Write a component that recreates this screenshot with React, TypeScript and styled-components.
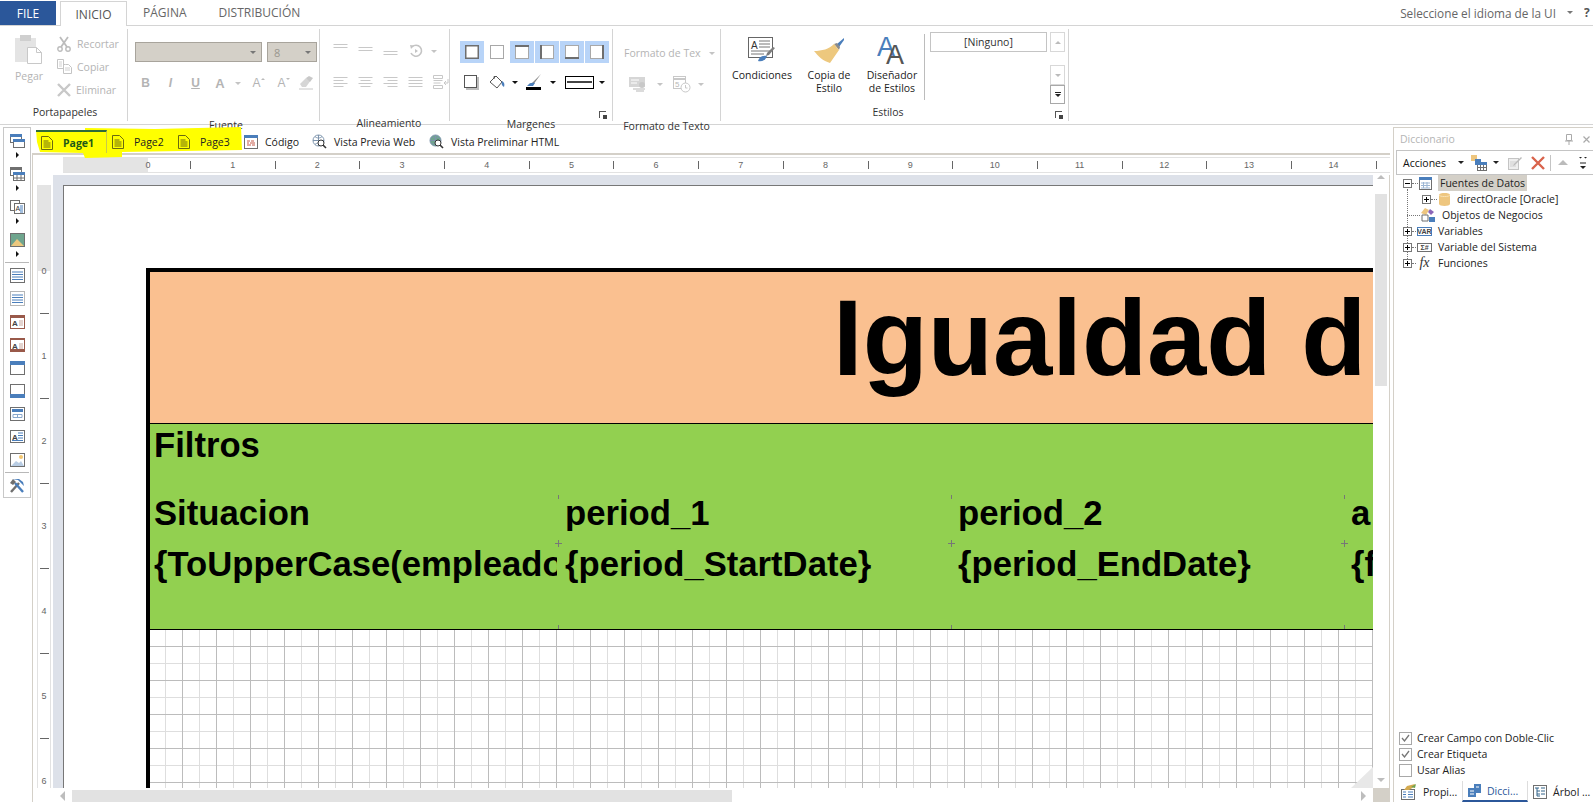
import React from "react";
import styled, { createGlobalStyle } from "styled-components";

const UI = `"Open Sans", "Noto Sans", "Liberation Sans", sans-serif`;
const ARIAL = `"Liberation Sans", Arial, sans-serif`;
const LINE = "#d4d4d4";
const KHAKI = "#d4d0c8";
const OFF = "#b4b4b4";

const Global = createGlobalStyle`
  html, body { margin: 0; padding: 0; background: #fff; overflow: hidden; }
  #root { width: 1593px; height: 802px; }
`;

const Root = styled.div`
  width: 1593px; height: 802px; display: flex; flex-direction: column;
  font-family: ${UI}; font-size: 10.5px; color: #333; background: #fff; overflow: hidden;
`;
const Svg = styled.svg`display: block; flex: none;`;

/* ---------- triangles ---------- */
const Caret = styled.span<{ $dir?: "d" | "u" | "r" | "l"; $c?: string; $s?: number }>`
  display: block; flex: none; width: 0; height: 0;
  ${({ $dir = "d", $c = "#333", $s = 3 }) => {
    const side = `border-left:${$s}px solid transparent;border-right:${$s}px solid transparent;`;
    const vert = `border-top:${$s}px solid transparent;border-bottom:${$s}px solid transparent;`;
    if ($dir === "d") return side + `border-top:${$s}px solid ${$c};`;
    if ($dir === "u") return side + `border-bottom:${$s}px solid ${$c};`;
    if ($dir === "r") return vert + `border-left:${$s}px solid ${$c};`;
    return vert + `border-right:${$s}px solid ${$c};`;
  }}
`;

/* ---------- tab strip ---------- */
const TabStrip = styled.div`
  height: 26px; box-sizing: border-box; display: flex; align-items: flex-end; border-bottom: 1px solid ${LINE}; flex: none;
`;
const FileTab = styled.div`
  width: 56px; height: 24px; background: #2b579a; color: #fff; font-size: 12px;
  display: flex; align-items: center; justify-content: center; margin-bottom: 0;
`;
const ActiveTab = styled.div`
  width: 67px; height: 25px; margin: 0 0 -1px 4px; box-sizing: border-box; background: #fff;
  border: 1px solid ${LINE}; border-bottom: 0; font-size: 12px; color: #555;
  display: flex; align-items: center; justify-content: center;
`;
const PlainTab = styled.div`
  padding: 0 16px; height: 25px; display: flex; align-items: center; font-size: 12px; color: #666;
`;
const LangBox = styled.div`
  margin-left: auto; height: 25px; display: flex; align-items: center; font-size: 11.8px; color: #666; padding-right: 0;
`;
const LangHelp = styled.span`
  margin-left: 11px; width: 9px; overflow: hidden; font-weight: 700; font-size: 12px; color: #555;
`;

/* ---------- ribbon ---------- */
const Ribbon = styled.div`
  height: 99px; box-sizing: border-box; flex: none; display: flex; padding: 3px 0 3px; border-bottom: 1px solid ${LINE};
`;
const Group = styled.div<{ $w: number }>`
  width: ${(p) => p.$w}px; box-sizing: border-box; flex: none; display: flex; flex-direction: column;
  border-right: 1px solid ${LINE}; position: relative;
`;
const GroupBody = styled.div`
  height: 75px; flex: none; overflow: visible;
`;
const GroupLabel = styled.div<{ $shift?: number; $right?: number }>`
  height: 17px; line-height: 17px; text-align: center; color: #333; font-size: 10.5px;
  padding-left: ${(p) => p.$shift ?? 0}px; padding-right: ${(p) => p.$right ?? 0}px;
`;
const Launcher = styled.span`
  position: absolute; right: 6px; bottom: 3px; width: 7px; height: 7px; box-sizing: border-box;
  border-left: 1px solid #555; border-top: 1px solid #555;
  &::after { content: ""; position: absolute; right: -1px; bottom: -1px; width: 4px; height: 4px; background: #444; }
`;

const PasteBody = styled(GroupBody)`display: flex; padding-left: 14px;`;
const PasteBtn = styled.div`
  width: 30px; display: flex; flex-direction: column; align-items: center; padding-top: 5px; color: ${OFF};
`;
const PasteText = styled.span`margin-top: 5px; line-height: 14px;`;
const ClipCol = styled.div`margin-left: 13px; padding-top: 3px; display: flex; flex-direction: column;`;
const ClipRow = styled.div`height: 23px; display: flex; align-items: center; gap: 5px; color: ${OFF};`;

const Stack = styled(GroupBody)<{ $pad: number; $top: number }>`
  padding-left: ${(p) => p.$pad}px; padding-top: ${(p) => p.$top}px; display: flex; flex-direction: column;
`;
const Combo = styled.div<{ $w: number }>`
  width: ${(p) => p.$w}px; height: 20px; box-sizing: border-box; background: ${KHAKI};
  border: 1px solid #a8a49c; display: flex; align-items: center; padding: 0 5px 0 6px; color: #9a978f; font-size: 11px;
  justify-content: space-between;
`;
const ComboRow = styled.div`display: flex; gap: 5px; margin-bottom: 10px;`;
const IconRow = styled.div<{ $mt?: number }>`
  display: flex; height: 22px; align-items: center; margin-top: ${(p) => p.$mt ?? 0}px;
`;
const Cell = styled.div<{ $w: number }>`
  width: ${(p) => p.$w}px; flex: none; height: 100%; display: flex; align-items: center; justify-content: center;
`;
const Glyph = styled.span<{ $b?: boolean; $i?: boolean; $u?: boolean; $s?: number }>`
  font-family: ${ARIAL}; color: ${OFF}; line-height: 1; font-size: ${(p) => p.$s ?? 12}px;
  font-weight: ${(p) => (p.$b ? 700 : 400)}; font-style: ${(p) => (p.$i ? "italic" : "normal")};
  text-decoration: ${(p) => (p.$u ? "underline" : "none")}; position: relative;
`;
const GlyphMark = styled.span`position: absolute; right: -4px; top: 1px;`;

const BorderBtn = styled.div<{ $on?: boolean }>`
  width: 24px; height: 22px; flex: none; background: ${(p) => (p.$on ? "#b8d4f8" : "transparent")};
  display: flex; align-items: center; justify-content: center;
`;
const BorderRow = styled.div`display: flex; gap: 1px;`;
const LineBox = styled.div`
  width: 29px; height: 13px; box-sizing: border-box; border: 1px solid #000; display: flex; align-items: center;
  &::after { content: ""; flex: 1; height: 2px; margin: 0 1px; background: #444; }
`;
const FormatRow = styled.div`display: flex; align-items: center; height: 20px; color: ${OFF};`;
const FormatText = styled.div`width: 77px; overflow: hidden; white-space: nowrap; margin-right: 8px;`;

const StyleBody = styled(GroupBody)`display: flex; padding-left: 10px;`;
const BigBtn = styled.div<{ $w: number }>`
  width: ${(p) => p.$w}px; flex: none; display: flex; flex-direction: column; align-items: center; padding-top: 6px; color: #222;
`;
const BigIcon = styled.div`height: 30px; display: flex; align-items: center;`;
const BigText = styled.div`margin-top: 4px; line-height: 13px; text-align: center; white-space: pre-line;`;
const StyleSep = styled.div`width: 1px; height: 66px; margin: 5px 5px 0 5px; background: #bcbcbc; flex: none;`;
const StyleName = styled.div`
  width: 117px; height: 20px; box-sizing: border-box; margin-top: 3px; border: 1px solid #c4c4c4;
  display: flex; align-items: center; justify-content: center; flex: none; color: #333;
`;
const SpinCol = styled.div`margin: 3px 0 0 3px; width: 15px; display: flex; flex-direction: column;`;
const SpinBtn = styled.div<{ $h: number; $mt?: number; $dark?: boolean }>`
  height: ${(p) => p.$h}px; box-sizing: border-box; margin-top: ${(p) => p.$mt ?? 0}px;
  border: 1px solid ${(p) => (p.$dark ? "#a8a8a8" : "#d8d8d8")}; display: flex; flex-direction: column; gap: 1px;
  align-items: center; justify-content: center;
`;
const SpinBar = styled.span`width: 6px; height: 1px; background: #222;`;

/* ---------- work area ---------- */
const Work = styled.div`flex: 1; min-height: 0; display: flex;`;

const ToolBox = styled.div`
  width: 28px; height: 371px; box-sizing: border-box; margin: 2px 1px 0 3px; flex: none;
  border: 1px solid #c8c8c8; display: flex; flex-direction: column; align-items: center; padding-top: 1px;
`;
const ToolCell = styled.div`height: 23px; width: 100%; flex: none; display: flex; align-items: center; justify-content: center;`;
const ToolArrow = styled.div`height: 10px; flex: none; padding-left: 1px;`;
const ToolSep = styled.div`
  height: 3px; width: 100%; flex: none; display: flex; align-items: center; padding: 0 1px; box-sizing: border-box;
  &::after { content: ""; flex: 1; height: 1px; background: #b8b8b8; }
`;

const Center = styled.div`width: 1358px; flex: none; display: flex; flex-direction: column;`;
const DocTabs = styled.div`
  height: 28px; flex: none; position: relative; z-index: 2; display: flex; padding: 5px 0 0 4px; box-sizing: border-box;
`;
const Highlight = styled.svg`position: absolute; left: 3px; top: 2px; z-index: 0;`;
const DocTab = styled.div<{ $w: number; $on?: boolean; $gap?: number }>`
  width: ${(p) => p.$w}px; height: 23px; box-sizing: border-box; flex: none; position: relative; z-index: 1;
  display: flex; align-items: center; gap: ${(p) => p.$gap ?? 7}px; padding-left: 5px; white-space: nowrap; color: #222;
  ${(p) => p.$on && `border-top: 2px solid #2f6a3a; border-right: 1px solid #c9c94a; font-weight: 700; color: #1d5a18;`}
`;

const Editor = styled.div`
  flex: 1; min-height: 0; display: grid; grid-template-columns: 20px 1320px 17px; grid-template-rows: 20px 613px 14px;
  border-top: 2px solid ${KHAKI}; border-left: 1px solid ${KHAKI};
`;
const HRuler = styled.div`
  grid-column: 2 / 4; margin: 2px 0 2px 10px; display: flex; overflow: hidden; font-size: 9px; color: #666;
  border-top: 1px solid #e2e2e2; border-bottom: 1px solid #e2e2e2; box-sizing: border-box;
`;
const RulerGrayH = styled.div`width: 85px; flex: none; background: #e4e4e4;`;
const HCell = styled.div`
  width: 84.7px; flex: none; position: relative; display: flex; align-items: center;
  &::after { content: ""; position: absolute; left: 42px; top: 3px; bottom: 3px; width: 1px; background: #666; }
`;
const HNum = styled.span`width: 12px; margin-left: -6px; text-align: center; font-family: ${ARIAL};`;
const VRuler = styled.div`
  margin: 10px 2px 0 4px; display: flex; flex-direction: column; overflow: hidden; font-size: 9px; color: #666;
  border-left: 1px solid #e2e2e2; border-right: 1px solid #e2e2e2; box-sizing: border-box;
`;
const RulerGrayV = styled.div`height: 86px; flex: none; background: #e4e4e4;`;
const VCell = styled.div`
  height: 85px; flex: none; position: relative; text-align: center;
  &::after { content: ""; position: absolute; left: 2px; top: 42px; width: 9px; height: 1px; background: #666; }
`;
const VNum = styled.span`display: block; margin-top: -5px; line-height: 10px; font-family: ${ARIAL};`;

const Canvas = styled.div`
  background: #dde1e9; padding: 10px 0 0 10px; overflow: hidden; position: relative; box-sizing: border-box;
`;
const Sheet = styled.div`
  width: 1500px; height: 800px; box-sizing: border-box; background: #fff; padding: 82px 0 0 82px;
  border-top: 1px solid #777; border-left: 1px solid #777;
`;
const Report = styled.div`border-top: 4px solid #000; border-left: 4px solid #000; width: 1400px; height: 700px;`;
const TitleBand = styled.div`
  height: 152px; box-sizing: border-box; background: #fac090; border-bottom: 1px solid #000;
  padding-left: 683px; font: 700 106.67px/132px ${ARIAL}; color: #000; white-space: nowrap; overflow: hidden;
`;
const GreenBand = styled.div`
  height: 206px; box-sizing: border-box; background: #92d050; border-bottom: 1px solid #000;
  font: 700 34.67px ${ARIAL}; color: #000;
`;
const FilterTitle = styled.div`height: 71px; line-height: 42px; padding-left: 4px;`;
const FieldGrid = styled.div`
  display: grid; grid-template-columns: 408px 393px 393px 393px; grid-template-rows: 48px 86px;
`;
const FieldCell = styled.div<{ $pad: number; $lh: number; $first?: boolean; $cross?: boolean }>`
  position: relative; padding-left: ${(p) => p.$pad}px; line-height: ${(p) => p.$lh}px; min-width: 0;
  &::before {
    content: ""; position: absolute; left: -3px; top: ${(p) => (p.$cross ? "-3px" : "0")};
    width: 7px; height: ${(p) => (p.$cross ? "7px" : "4px")};
    background:
      linear-gradient(#777, #777) 3px 0 / 1px 100% no-repeat
      ${(p) => (p.$cross ? `, linear-gradient(#777, #777) 0 3px / 100% 1px no-repeat` : "")};
    display: ${(p) => (p.$first ? "none" : "block")};
  }
  &::after {
    content: ""; position: absolute; left: 0; bottom: 0; width: 1px; height: 4px; background: #777;
    display: ${(p) => (p.$cross && !p.$first ? "block" : "none")};
  }
`;
const FieldText = styled.div`overflow: hidden; white-space: nowrap; margin-right: 1px;`;
const GridArea = styled.div`
  height: 340px;
  background:
    linear-gradient(#bcbcbc 1px, transparent 1px) 0 16px / 100% 34px,
    linear-gradient(90deg, #bcbcbc 1px, transparent 1px) 32px 0 / 34px 100%,
    linear-gradient(#dedede 1px, transparent 1px) 0 33px / 100% 34px,
    linear-gradient(90deg, #dedede 1px, transparent 1px) 15px 0 / 34px 100%,
    #fff;
`;
const CornerFold = styled.div`
  position: absolute; right: 0; bottom: 0; width: 22px; height: 21px; background: #e8e8e8;
  clip-path: polygon(100% 0, 100% 100%, 0 100%);
`;
const VScroll = styled.div`
  display: flex; flex-direction: column; align-items: center; padding: 0 3px 6px 2px; box-sizing: border-box;
  border-right: 1px solid ${KHAKI};
`;
const VThumb = styled.div`width: 12px; height: 192px; margin-top: 15px; background: #e2e2e2; flex: none;`;
const HScroll = styled.div`
  display: flex; align-items: center; padding: 2px 7px 0 7px; box-sizing: border-box;
`;
const HThumb = styled.div`width: 660px; height: 12px; margin-left: 7px; background: #e2e2e2; flex: none;`;
const ScrollEnd = styled.div`margin-left: auto;`;
const Corner = styled.div`background: ${KHAKI};`;

/* ---------- right panel ---------- */
const Panel = styled.div`
  flex: 1; min-width: 0; margin: 2px 0 0 3px; border-left: 1px solid ${KHAKI}; border-top: 1px solid ${KHAKI};
  display: flex; flex-direction: column; position: relative;
`;
const PanelTitle = styled.div`
  height: 22px; flex: none; display: flex; align-items: center; padding: 0 0 0 6px; color: #b5b5b5; gap: 0;
`;
const PanelTitleText = styled.span`flex: 1;`;
const PanelTool = styled.div`
  margin-left: 2px; height: 25px; box-sizing: border-box; flex: none; border: 1px solid #c4c4c4; border-right: 0;
  display: flex; align-items: center; padding-left: 6px; color: #111;
`;
const ToolGap = styled.span<{ $w: number }>`width: ${(p) => p.$w}px; flex: none;`;
const Tree = styled.div`position: relative; flex: none; padding-left: 9px;`;
const TreeSpine = styled.div`
  position: absolute; left: 13px; top: 14px; height: 72px; border-left: 1px dotted #777;
`;
const TreeRow = styled.div<{ $indent?: number }>`
  height: 16px; display: flex; align-items: center; color: #222; white-space: nowrap; padding-left: ${(p) => p.$indent ?? 0}px;
  position: relative;
`;
const Twist = styled.span`
  width: 9px; height: 9px; box-sizing: border-box; border: 1px solid #777; background: #fff; flex: none; position: relative;
  &::before { content: ""; position: absolute; left: 1px; right: 1px; top: 3px; height: 1px; background: #000; }
`;
const TwistPlus = styled(Twist)`
  &::after { content: ""; position: absolute; top: 1px; bottom: 1px; left: 3px; width: 1px; background: #000; }
`;
const Dots = styled.span<{ $w: number }>`
  width: ${(p) => p.$w}px; flex: none; margin-right: 1px; border-top: 1px dotted #777;
`;
const TreeIcon = styled.span<{ $w: number; $gap: number }>`
  width: ${(p) => p.$w}px; margin-right: ${(p) => p.$gap}px; flex: none; display: flex; justify-content: center;
`;
const TreeLabel = styled.span<{ $sel?: boolean }>`
  ${(p) => (p.$sel ? `background: ${KHAKI}; padding: 1px 2px; margin-left: -2px;` : "")}
  line-height: 14px;
`;
const FxMark = styled.span`font: italic 14px "Liberation Serif", serif; color: #333;`;
const Checks = styled.div`margin-top: auto; flex: none; padding: 0 0 3px 5px; display: flex; flex-direction: column;`;
const CheckRow = styled.label`height: 16px; display: flex; align-items: center; gap: 5px; color: #222;`;
const Box = styled.span`
  width: 13px; height: 13px; box-sizing: border-box; border: 1px solid #a8a8a8; display: flex; align-items: center; justify-content: center;
`;
const BottomTabs = styled.div`height: 21px; flex: none; display: flex; color: #222;`;
const BottomTab = styled.div<{ $w: number; $on?: boolean; $pad: number }>`
  width: ${(p) => p.$w}px; box-sizing: border-box; flex: none; display: flex; align-items: center; gap: 6px;
  padding-left: ${(p) => p.$pad}px; white-space: nowrap;
  ${(p) => p.$on && `border-left: 1px solid #ddd; border-right: 1px solid #ddd; border-bottom: 2px solid #2b579a; color: #2b579a;`}
`;

/* ---------- icons ---------- */
const G = "#6f6f6f";
const BL = "#4a7ebb";
const LG = "#c4c4c4";

const PasteIcon = () => (
  <Svg width="28" height="30" viewBox="0 0 28 30">
    <rect x="0" y="4" width="21" height="24" fill="#e4e4e4" />
    <rect x="5" y="1" width="11" height="6" fill="#cfcfcf" />
    <path d="M12.5 13.5h9l5 5v11h-14z" fill="#fff" stroke="#c8c8c8" />
    <path d="M21.5 13.5v5h5" fill="none" stroke="#c8c8c8" />
  </Svg>
);
const ScissorsIcon = () => (
  <Svg width="15" height="16" viewBox="0 0 15 16">
    <path d="M3 1l7 10M11 1L4 11" stroke="#bcbcbc" strokeWidth="1.8" fill="none" />
    <circle cx="3" cy="13" r="2.2" fill="none" stroke="#bcbcbc" strokeWidth="1.4" />
    <circle cx="11" cy="13" r="2.2" fill="none" stroke="#bcbcbc" strokeWidth="1.4" />
  </Svg>
);
const CopyIcon = () => (
  <Svg width="15" height="15" viewBox="0 0 15 15">
    <path d="M.5.5h6v9h-6z M8.5 5.5h3l3 3v6h-8v-9z" fill="#fff" stroke="#c4c4c4" />
    <path d="M2 3h3M2 5h3M2 7h3M8 9h5M8 11h5" stroke="#d0d0d0" />
  </Svg>
);
const CrossIcon = ({ c = "#c8c8c8", s = 14 }: { c?: string; s?: number }) => (
  <Svg width={s} height={s} viewBox="0 0 14 14">
    <path d="M1 1l12 12M13 1L1 13" stroke={c} strokeWidth="2.4" fill="none" />
  </Svg>
);
const EraserIcon = () => (
  <Svg width="15" height="14" viewBox="0 0 15 14">
    <path d="M1 8l6-6 5 2-5 7H3z" fill="#d6d6d6" />
    <path d="M7 2l3-2 4 2-3 4z" fill="#c8c8c8" />
    <path d="M0 13h14" stroke="#c8c8c8" />
  </Svg>
);
const AlignLines = ({ y, w = [14, 14, 14], o = "l" }: { y: number; w?: number[]; o?: "l" | "c" | "r" }) => (
  <Svg width="15" height="16" viewBox="0 0 15 16">
    {w.map((v, i) => {
      const x = o === "l" ? 0.5 : o === "r" ? 14.5 - v : (15 - v) / 2;
      return <path key={i} d={`M${x} ${y + i * 3 + 0.5}h${v}`} stroke="#c8c8c8" />;
    })}
  </Svg>
);
const RotateIcon = () => (
  <Svg width="14" height="14" viewBox="0 0 14 14">
    <path d="M3 3a5.5 5.5 0 1 1-1 6" fill="none" stroke="#c4c4c4" strokeWidth="1.6" />
    <path d="M1 1l4 .5L2 5z" fill="#c4c4c4" />
    <path d="M6 5l3 2-3 2z" fill="#c4c4c4" />
  </Svg>
);
const WrapIcon = () => (
  <Svg width="16" height="16" viewBox="0 0 16 16">
    <path d="M.5 1.5h9v3h-9zM.5 6.5h9M.5 9h7M.5 11.5h9v3h-9z" fill="none" stroke="#c8c8c8" />
    <path d="M15 5v4h-4M11 9l2-2M11 9l2 2" fill="none" stroke="#c8c8c8" />
  </Svg>
);
const BorderIcon = ({ side }: { side: "all" | "none" | "t" | "l" | "b" | "r" }) => {
  const dark = "#6e6e6e";
  return (
    <Svg width="14" height="14" viewBox="0 0 14 14">
      <rect x=".5" y=".5" width="13" height="13" fill="#fff" stroke={side === "all" ? dark : "#a8a8a8"} strokeWidth={side === "all" ? 2 : 1} />
      {side === "t" && <path d="M0 1h14" stroke={dark} strokeWidth="2" />}
      {side === "b" && <path d="M0 13h14" stroke={dark} strokeWidth="2" />}
      {side === "l" && <path d="M1 0v14" stroke={dark} strokeWidth="2" />}
      {side === "r" && <path d="M13 0v14" stroke={dark} strokeWidth="2" />}
    </Svg>
  );
};
const ShadowBox = () => (
  <Svg width="15" height="15" viewBox="0 0 15 15">
    <rect x="2" y="2" width="13" height="13" fill="#bdbdbd" />
    <rect x=".5" y=".5" width="12" height="12" fill="#fff" stroke="#555" />
  </Svg>
);
const BucketIcon = () => (
  <Svg width="16" height="15" viewBox="0 0 16 15">
    <path d="M7 1l6 6-5 6-7-6z" fill="#fff" stroke="#555" />
    <path d="M5 4V1.5h2" fill="none" stroke="#555" />
    <path d="M13 6c2 1 3 3 2 6-2-1-3-3-2-6z" fill={BL} />
  </Svg>
);
const PenIcon = () => (
  <Svg width="16" height="17" viewBox="0 0 16 17">
    <path d="M15 0L6 9l-3 1 1 2 3-1z" fill="#8a8a8a" />
    <path d="M1 12c2-3 5-4 8-3l-2 3z" fill={BL} />
    <rect x="0" y="13" width="15" height="3" fill="#000" />
  </Svg>
);
const MonitorIcon = () => (
  <Svg width="18" height="16" viewBox="0 0 18 16">
    <rect x="0" y="1" width="16" height="10" fill="#d6d6d6" />
    <path d="M2 4h8M2 7h6" stroke="#fff" />
    <path d="M4 13h12M7 15h8" stroke="#cfcfcf" strokeWidth="1.4" />
    <circle cx="13" cy="9" r="3" fill="#c8c8c8" />
  </Svg>
);
const CalendarIcon = () => (
  <Svg width="18" height="17" viewBox="0 0 18 17">
    <rect x=".5" y=".5" width="12" height="12" fill="#fff" stroke="#c8c8c8" />
    <path d="M1 3h11" stroke="#c8c8c8" strokeWidth="2" />
    <text x="2" y="11" fontFamily={ARIAL} fontSize="8" fill="#b8b8b8">5</text>
    <circle cx="12.5" cy="11.5" r="4.5" fill="#fff" stroke="#c8c8c8" />
    <path d="M12.5 9v3h2" stroke="#c8c8c8" fill="none" />
  </Svg>
);
const ConditionIcon = () => (
  <Svg width="28" height="26" viewBox="0 0 28 26">
    <rect x=".5" y=".5" width="24" height="20" fill="#fff" stroke="#666" />
    <text x="3" y="12" fontFamily={ARIAL} fontSize="10" fill="#333">A</text>
    <path d="M11 4h11M11 7h11M11 10h11M3 14h19M3 17h13" stroke="#777" />
    <path d="M27 11l-6 7-3 1 1-3 6-6z" fill="#7d7d7d" />
    <path d="M10 24c1-4 5-6 9-5-1 4-5 6-9 5z" fill={BL} />
  </Svg>
);
const BrushIcon = () => (
  <Svg width="31" height="27" viewBox="0 0 31 27">
    <path d="M30 1l-7 6 2 3 5-7z" fill={BL} />
    <path d="M20 7l3-1 3 4-1 3z" fill="#8a8a8a" />
    <path d="M0 14c8 0 15-2 20-7l5 6c-3 4-6 9-9 13C9 24 4 19 0 14z" fill="#edc87e" />
  </Svg>
);
const FontsIcon = () => (
  <Svg width="30" height="30" viewBox="0 0 30 30">
    <text x="0" y="21" fontFamily={ARIAL} fontSize="27" fill={BL}>A</text>
    <text x="9" y="29" fontFamily={ARIAL} fontSize="27" fill="#555">A</text>
  </Svg>
);
const Win = ({ x, y, w = 11, h = 8, top = BL }: { x: number; y: number; w?: number; h?: number; top?: string }) => (
  <>
    <rect x={x + 0.5} y={y + 0.5} width={w} height={h} fill="#fff" stroke={G} />
    <rect x={x} y={y} width={w + 1} height="3" fill={top} />
  </>
);
const TWindows = () => (
  <Svg width="15" height="14" viewBox="0 0 15 14"><Win x={0} y={0} /><Win x={3} y={5} /></Svg>
);
const TTables = () => (
  <Svg width="15" height="14" viewBox="0 0 15 14">
    <Win x={0} y={0} top={G} /><Win x={3} y={5} />
    <path d="M3 11h11M7 8v6M11 8v6" stroke={G} />
  </Svg>
);
const TText = () => (
  <Svg width="15" height="14" viewBox="0 0 15 14">
    <rect x=".5" y=".5" width="9" height="10" fill="#fff" stroke={G} />
    <rect x="4.5" y="3.5" width="10" height="10" fill="#fff" stroke={G} />
    <text x="5.5" y="11" fontFamily={ARIAL} fontSize="7" fill="#333">A</text>
    <path d="M10 6h3M10 8h3M10 10h3M10 12h3" stroke={BL} />
  </Svg>
);
const TImage = () => (
  <Svg width="15" height="14" viewBox="0 0 15 14">
    <rect x=".5" y=".5" width="14" height="13" fill="#6fa58e" stroke={G} />
    <path d="M1 13l6-7 7 7z" fill="#edc87e" />
  </Svg>
);
const TLines = ({ serr = "t" }: { serr?: "t" | "b" | "both" }) => (
  <Svg width="15" height="15" viewBox="0 0 15 15">
    <rect x=".5" y=".5" width="14" height="14" fill="#fff" stroke={G} strokeDasharray={serr === "both" ? "1 1" : undefined} />
    <path d="M2 4h11M2 6.5h11M2 9h11M2 11.5h11" stroke={BL} />
  </Svg>
);
const TBrown = ({ inv }: { inv?: boolean }) => (
  <Svg width="15" height="14" viewBox="0 0 15 14">
    <rect x=".5" y=".5" width="14" height="13" fill="#fff" stroke="#99594a" />
    <rect x="0" y="0" width="15" height={inv ? 2 : 3} fill="#99594a" />
    {inv && <rect x="0" y="11" width="15" height="3" fill="#99594a" />}
    <text x="2" y="11" fontFamily={ARIAL} fontSize="8" fontWeight="700" fill="#444">A</text>
    <path d="M9 6h4M9 8h4M9 10h4" stroke="#c9a79e" />
  </Svg>
);
const TBand = ({ bottom }: { bottom?: boolean }) => (
  <Svg width="15" height="14" viewBox="0 0 15 14">
    <rect x=".5" y=".5" width="14" height="13" fill="#fff" stroke={G} />
    <rect x="0" y={bottom ? 10 : 0} width="15" height="4" fill={BL} />
  </Svg>
);
const TForm = () => (
  <Svg width="15" height="14" viewBox="0 0 15 14">
    <rect x=".5" y=".5" width="14" height="13" fill="#fff" stroke={G} />
    <rect x="2" y="2" width="11" height="3" fill={BL} />
    <path d="M3 7.5h9v3H3zM7.5 7.5v3" fill="none" stroke="#8aa8cc" />
  </Svg>
);
const TLabel = () => (
  <Svg width="15" height="13" viewBox="0 0 15 13">
    <rect x=".5" y=".5" width="14" height="12" fill="#fff" stroke={G} />
    <text x="2" y="10" fontFamily={ARIAL} fontSize="8" fontWeight="700" fill="#444">A</text>
    <path d="M8 3h5M8 5.5h5M8 8h5M2 10.5h11" stroke={BL} />
  </Svg>
);
const TPicture = () => (
  <Svg width="15" height="14" viewBox="0 0 15 14">
    <rect x=".5" y=".5" width="14" height="13" fill="#fff" stroke={G} />
    <circle cx="11" cy="4" r="2" fill="#f4c770" />
    <path d="M1 13l5-5 3 2 2-2 3 5z" fill="#b9cde4" />
  </Svg>
);
const TTools = () => (
  <Svg width="16" height="15" viewBox="0 0 16 15">
    <path d="M2 14L10 5" stroke={G} strokeWidth="2.4" />
    <path d="M14 14L6 5" stroke={BL} strokeWidth="2.4" />
    <path d="M3 1l6 1 6 6-1-4-4-3z" fill={BL} />
    <path d="M1 5l3-4 3 3-3 3z" fill={G} />
  </Svg>
);
const PageIcon = () => (
  <Svg width="12" height="14" viewBox="0 0 12 14">
    <path d="M.5.5h7l4 4v9H.5z" fill="none" stroke="#6a6a10" />
    <path d="M2.5 5h5M2.5 7h7M2.5 9h7M2.5 11h7" stroke="#6a6a10" />
  </Svg>
);
const CodeIcon = () => (
  <Svg width="14" height="14" viewBox="0 0 14 14">
    <rect x=".5" y=".5" width="13" height="13" fill="#fff" stroke={G} />
    <rect x="0" y="0" width="14" height="3" fill={BL} />
    <path d="M3 6h3M7 6h3M3 8h2M6 8h5M3 10h4M8 10h3" stroke="#c65b4a" />
  </Svg>
);
const GlobeLens = ({ fill = "#fff" }: { fill?: string }) => (
  <Svg width="15" height="15" viewBox="0 0 15 15">
    <circle cx="6.5" cy="6.5" r="5.5" fill={fill} stroke="#7d94ad" />
    <path d="M1 6.5h11M6.5 1v11M3 2.5c2 2 5 2 7 0M3 10.5c2-2 5-2 7 0" stroke="#7d94ad" fill="none" />
    <circle cx="9" cy="9" r="3" fill="#fff" stroke="#333" />
    <path d="M11 11l3 3" stroke="#333" strokeWidth="1.6" />
  </Svg>
);
const TreeTable = () => (
  <Svg width="13" height="13" viewBox="0 0 13 13">
    <rect x=".5" y=".5" width="12" height="12" fill="#fff" stroke={G} />
    <rect x="0" y="0" width="13" height="3" fill={BL} />
    <path d="M2 6h9M2 8.500h9M2 11h9M4.500 5v6M8 5v6" stroke="#9cb6d4" />
  </Svg>
);
const DbIcon = () => (
  <Svg width="11" height="13" viewBox="0 0 11 13">
    <path d="M0 2c0-2.600 11-2.600 11 0v9c0 2.600-11 2.600-11 0z" fill="#eec67f" />
    <path d="M0 2c0 2 11 2 11 0" fill="none" stroke="#fae3b6" />
  </Svg>
);
const BizIcon = () => (
  <Svg width="15" height="15" viewBox="0 0 15 15">
    <path d="M0 5l4-5 4 2-3 5z" fill="#eec67f" />
    <path d="M9 1l4 3-3 3-3-3z" fill="#8b66b8" />
    <path d="M1 7h6v6H1z" fill="none" stroke={G} />
    <rect x="8" y="9" width="6" height="5" fill={BL} />
  </Svg>
);
const TagBox = ({ t, c = BL }: { t: string; c?: string }) => (
  <Svg width="15" height="9" viewBox="0 0 15 9">
    <rect x=".5" y=".5" width="14" height="8" fill="#fff" stroke={c} />
    <text x="7.5" y="7" textAnchor="middle" fontFamily={ARIAL} fontSize="7" fontWeight="700" fill="#444">{t}</text>
  </Svg>
);
const NewIcon = () => (
  <Svg width="16" height="16" viewBox="0 0 16 16">
    <path d="M0 0h6v6H0z" fill="#eec67f" />
    <rect x="4" y="4" width="6" height="6" fill={BL} />
    <rect x="6.500" y="7.500" width="9" height="8" fill="#fff" stroke={G} />
    <rect x="6" y="7" width="10" height="3" fill={BL} />
    <path d="M9.500 10v5M12.500 10v5M7 12.500h8" stroke={G} />
  </Svg>
);
const EditIcon = () => (
  <Svg width="14" height="14" viewBox="0 0 14 14">
    <rect x=".5" y="2.500" width="10" height="11" fill="#eee" stroke="#c4c4c4" />
    <path d="M2 6h7M2 8h5M2 10h6" stroke="#d0d0d0" />
    <path d="M13 1L6 8l-1 2 2-1 7-7z" fill="#bbb" />
  </Svg>
);
const PropIcon = () => (
  <Svg width="16" height="16" viewBox="0 0 16 16">
    <rect x=".5" y="5.500" width="13" height="10" fill="#fff" stroke={G} />
    <path d="M2 8h3M7 8h5M2 10.500h3M7 10.500h5M2 13h3M7 13h5" stroke={BL} />
    <path d="M3 6l3-4 8-2-1 3-5 3z" fill="#d4aa50" />
    <path d="M10 3l5-3-1 4z" fill="#6fa34f" />
  </Svg>
);
const DictIcon = () => (
  <Svg width="13" height="13" viewBox="0 0 13 13">
    <rect x="0" y="4" width="8" height="9" fill={BL} />
    <rect x="6" y="0" width="7" height="9" fill={BL} />
    <path d="M2 7h4M2 10h4M8 3h3" stroke="#fff" />
  </Svg>
);
const TreeTabIcon = () => (
  <Svg width="14" height="14" viewBox="0 0 14 14">
    <rect x=".5" y=".5" width="13" height="13" fill="#fff" stroke={G} />
    <path d="M2 3h4M4 3v8M4 6h3M4 9h3M4 11h3M8 3h4M8 6h4M8 9h4" stroke="#33658a" />
  </Svg>
);
const TickIcon = () => (
  <Svg width="9" height="8" viewBox="0 0 9 8"><path d="M1 4l2.500 3L8 1" fill="none" stroke="#777" strokeWidth="1.300" /></Svg>
);
const PinIcon = () => (
  <Svg width="8" height="11" viewBox="0 0 8 11">
    <path d="M1.500.500h5v6h-5zM0 7h8M4 7v4" fill="none" stroke="#aaa" />
  </Svg>
);
const MoreIcon = () => (
  <Svg width="8" height="14" viewBox="0 0 8 14">
    <path d="M0 1l1.500 1.500L3 1zM5 1l1.500 1.500L8 1z" fill="#222" />
    <path d="M1 7h6" stroke="#222" />
    <path d="M1 10h6l-3 3z" fill="#222" />
  </Svg>
);

const rulerH = Array.from({ length: 15 }, (_, i) => i);
const rulerV = Array.from({ length: 7 }, (_, i) => i);

export default function App() {
  return (
    <Root>
      <Global />
      <TabStrip>
        <FileTab>FILE</FileTab>
        <ActiveTab>INICIO</ActiveTab>
        <PlainTab>PÁGINA</PlainTab>
        <PlainTab>DISTRIBUCIÓN</PlainTab>
        <LangBox>
          Seleccione el idioma de la UI
          <ToolGap $w={11} />
          <Caret $c="#777" />
          <LangHelp>?</LangHelp>
        </LangBox>
      </TabStrip>

      <Ribbon>
        <Group $w={128}>
          <PasteBody>
            <PasteBtn>
              <PasteIcon />
              <PasteText>Pegar</PasteText>
            </PasteBtn>
            <ClipCol>
              <ClipRow><ScissorsIcon />Recortar</ClipRow>
              <ClipRow><CopyIcon />Copiar</ClipRow>
              <ClipRow><CrossIcon />Eliminar</ClipRow>
            </ClipCol>
          </PasteBody>
          <GroupLabel $shift={3}>Portapapeles</GroupLabel>
        </Group>

        <Group $w={192}>
          <Stack $pad={7} $top={13}>
            <ComboRow>
              <Combo $w={127}><span /><Caret $c="#777" /></Combo>
              <Combo $w={50}>8<Caret $c="#777" /></Combo>
            </ComboRow>
            <IconRow style={{ marginLeft: -2 }}>
              <Cell $w={25}><Glyph $b>B</Glyph></Cell>
              <Cell $w={25}><Glyph $i $b>I</Glyph></Cell>
              <Cell $w={25}><Glyph $u $b>U</Glyph></Cell>
              <Cell $w={24}><Glyph $b $s={13}>A</Glyph></Cell>
              <Cell $w={12}><Caret $c="#c4c4c4" /></Cell>
              <Cell $w={25}><Glyph>A<GlyphMark><Caret $dir="u" $c="#bbb" $s={2} /></GlyphMark></Glyph></Cell>
              <Cell $w={25}><Glyph>A<GlyphMark><Caret $c="#bbb" $s={2} /></GlyphMark></Glyph></Cell>
              <Cell $w={25}><EraserIcon /></Cell>
            </IconRow>
          </Stack>
          <GroupLabel $shift={5}>Fuente</GroupLabel>
        </Group>

        <Group $w={130}>
          <Stack $pad={8} $top={11}>
            <IconRow>
              <Cell $w={25}><AlignLines y={1} w={[14, 14]} /></Cell>
              <Cell $w={25}><AlignLines y={4} w={[14, 14]} /></Cell>
              <Cell $w={25}><AlignLines y={8} w={[14, 14]} /></Cell>
              <Cell $w={25}><RotateIcon /></Cell>
              <Cell $w={12}><Caret $c="#c4c4c4" /></Cell>
            </IconRow>
            <IconRow $mt={9}>
              <Cell $w={25}><AlignLines y={3} w={[14, 10, 14, 10]} /></Cell>
              <Cell $w={25}><AlignLines y={3} w={[14, 10, 14, 10]} o="c" /></Cell>
              <Cell $w={25}><AlignLines y={3} w={[14, 10, 14, 10]} o="r" /></Cell>
              <Cell $w={25}><AlignLines y={3} w={[14, 14, 14, 14]} /></Cell>
              <Cell $w={25}><WrapIcon /></Cell>
            </IconRow>
          </Stack>
          <GroupLabel $shift={9}>Alineamiento</GroupLabel>
        </Group>

        <Group $w={163}>
          <Stack $pad={10} $top={12}>
            <BorderRow>
              <BorderBtn $on><BorderIcon side="all" /></BorderBtn>
              <BorderBtn><BorderIcon side="none" /></BorderBtn>
              <BorderBtn $on><BorderIcon side="t" /></BorderBtn>
              <BorderBtn $on><BorderIcon side="l" /></BorderBtn>
              <BorderBtn $on><BorderIcon side="b" /></BorderBtn>
              <BorderBtn $on><BorderIcon side="r" /></BorderBtn>
            </BorderRow>
            <IconRow $mt={8}>
              <Cell $w={22}><ShadowBox /></Cell>
              <Cell $w={30}><BucketIcon /></Cell>
              <Cell $w={6}><Caret $c="#111" /></Cell>
              <Cell $w={32}><PenIcon /></Cell>
              <Cell $w={6}><Caret $c="#111" /></Cell>
              <ToolGap $w={9} />
              <LineBox />
              <ToolGap $w={5} />
              <Caret $c="#111" />
            </IconRow>
          </Stack>
          <GroupLabel>Margenes</GroupLabel>
          <Launcher />
        </Group>

        <Group $w={108}>
          <Stack $pad={11} $top={14}>
            <FormatRow>
              <FormatText>Formato de Texto</FormatText>
              <Caret $c="#c4c4c4" />
            </FormatRow>
            <IconRow $mt={10}>
              <Cell $w={27} style={{ marginLeft: 0 }}><MonitorIcon /></Cell>
              <Cell $w={18}><Caret $c="#c4c4c4" /></Cell>
              <Cell $w={26}><CalendarIcon /></Cell>
              <Cell $w={12}><Caret $c="#c4c4c4" /></Cell>
            </IconRow>
          </Stack>
          <GroupLabel>Formato de Texto</GroupLabel>
        </Group>

        <Group $w={348}>
          <StyleBody>
            <BigBtn $w={62}>
              <BigIcon><ConditionIcon /></BigIcon>
              <BigText>Condiciones</BigText>
            </BigBtn>
            <BigBtn $w={72}>
              <BigIcon><BrushIcon /></BigIcon>
              <BigText>{"Copia de\nEstilo"}</BigText>
            </BigBtn>
            <BigBtn $w={54}>
              <BigIcon><FontsIcon /></BigIcon>
              <BigText>{"Diseñador\nde Estilos"}</BigText>
            </BigBtn>
            <StyleSep />
            <StyleName>[Ninguno]</StyleName>
            <SpinCol>
              <SpinBtn $h={20}><Caret $dir="u" $c="#bbb" /></SpinBtn>
              <SpinBtn $h={20} $mt={13}><Caret $c="#bbb" /></SpinBtn>
              <SpinBtn $h={19} $dark><SpinBar /><Caret $c="#222" /></SpinBtn>
            </SpinCol>
          </StyleBody>
          <GroupLabel $right={13}>Estilos</GroupLabel>
          <Launcher />
        </Group>
      </Ribbon>

      <Work>
        <ToolBox>
          <ToolCell><TWindows /></ToolCell>
          <ToolArrow><Caret $dir="r" $c="#111" /></ToolArrow>
          <ToolCell><TTables /></ToolCell>
          <ToolArrow><Caret $dir="r" $c="#111" /></ToolArrow>
          <ToolCell><TText /></ToolCell>
          <ToolArrow><Caret $dir="r" $c="#111" /></ToolArrow>
          <ToolCell><TImage /></ToolCell>
          <ToolArrow><Caret $dir="r" $c="#111" /></ToolArrow>
          <ToolSep />
          <ToolCell><TLines /></ToolCell>
          <ToolCell><TLines serr="both" /></ToolCell>
          <ToolCell><TBrown /></ToolCell>
          <ToolCell><TBrown inv /></ToolCell>
          <ToolCell><TBand /></ToolCell>
          <ToolCell><TBand bottom /></ToolCell>
          <ToolCell><TForm /></ToolCell>
          <ToolCell><TLabel /></ToolCell>
          <ToolCell><TPicture /></ToolCell>
          <ToolSep />
          <ToolCell><TTools /></ToolCell>
        </ToolBox>

        <Center>
          <DocTabs>
            <Highlight width="208" height="32" viewBox="0 0 208 32">
              <path d="M1 3L50 3L50 1L120 2L206 0L207 23L87 25L87 30L50 31L48 26L5 25L2 15Z" fill="#ffff00" />
            </Highlight>
            <DocTab $w={71} $on $gap={10}><PageIcon />Page1</DocTab>
            <DocTab $w={66} $gap={10}><PageIcon />Page2</DocTab>
            <DocTab $w={66} $gap={10}><PageIcon />Page3</DocTab>
            <DocTab $w={68}><CodeIcon />Código</DocTab>
            <DocTab $w={117}><GlobeLens />Vista Previa Web</DocTab>
            <DocTab $w={160}><GlobeLens fill="#6fa58e" />Vista Preliminar HTML</DocTab>
          </DocTabs>

          <Editor>
            <span />
            <HRuler>
              <RulerGrayH />
              {rulerH.map((n) => (
                <HCell key={n}><HNum>{n}</HNum></HCell>
              ))}
            </HRuler>

            <VRuler>
              <RulerGrayV />
              {rulerV.map((n) => (
                <VCell key={n}><VNum>{n}</VNum></VCell>
              ))}
            </VRuler>
            <Canvas>
              <Sheet>
                <Report>
                  <TitleBand>Igualdad d</TitleBand>
                  <GreenBand>
                    <FilterTitle>Filtros</FilterTitle>
                    <FieldGrid>
                      <FieldCell $pad={4} $lh={36} $first><FieldText>Situacion</FieldText></FieldCell>
                      <FieldCell $pad={7} $lh={36}><FieldText>period_1</FieldText></FieldCell>
                      <FieldCell $pad={7} $lh={36}><FieldText>period_2</FieldText></FieldCell>
                      <FieldCell $pad={7} $lh={36}><FieldText>a</FieldText></FieldCell>
                      <FieldCell $pad={4} $lh={42} $first $cross><FieldText>{"{ToUpperCase(empleado"}</FieldText></FieldCell>
                      <FieldCell $pad={7} $lh={42} $cross><FieldText>{"{period_StartDate}"}</FieldText></FieldCell>
                      <FieldCell $pad={7} $lh={42} $cross><FieldText>{"{period_EndDate}"}</FieldText></FieldCell>
                      <FieldCell $pad={7} $lh={42} $cross><FieldText>{"{f"}</FieldText></FieldCell>
                    </FieldGrid>
                  </GreenBand>
                  <GridArea />
                </Report>
              </Sheet>
              <CornerFold />
            </Canvas>
            <VScroll>
              <ToolGap $w={0} style={{ height: 0 }} />
              <Caret $dir="u" $c="#bdbdbd" $s={4} style={{ marginTop: 0 }} />
              <VThumb />
              <ScrollEnd style={{ marginTop: "auto", marginLeft: 0 }}>
                <Caret $c="#bdbdbd" $s={4} />
              </ScrollEnd>
            </VScroll>

            <span />
            <HScroll>
              <Caret $dir="l" $c="#bdbdbd" $s={5} />
              <HThumb />
              <ScrollEnd><Caret $dir="r" $c="#bdbdbd" $s={5} /></ScrollEnd>
            </HScroll>
            <Corner />
          </Editor>
        </Center>

        <Panel>
          <PanelTitle>
            <PanelTitleText>Diccionario</PanelTitleText>
            <PinIcon />
            <ToolGap $w={10} />
            <CrossIcon c="#aaa" s={7} />
            <ToolGap $w={3} />
          </PanelTitle>
          <PanelTool>
            Acciones
            <ToolGap $w={12} />
            <Caret $c="#222" />
            <ToolGap $w={7} />
            <NewIcon />
            <ToolGap $w={6} />
            <Caret $c="#222" />
            <ToolGap $w={9} />
            <EditIcon />
            <ToolGap $w={9} />
            <CrossIcon c="#d9634c" />
            <ToolGap $w={5} />
            <Svg width="1" height="16" viewBox="0 0 1 16"><path d="M.5 0v16" stroke="#c4c4c4" /></Svg>
            <ToolGap $w={7} />
            <Caret $dir="u" $c="#bbb" $s={5} />
            <ToolGap $w={11} />
            <MoreIcon />
          </PanelTool>
          <Tree>
            <TreeSpine />
            <TreeRow>
              <Twist />
              <Dots $w={6} />
              <TreeIcon $w={13} $gap={8}><TreeTable /></TreeIcon>
              <TreeLabel $sel>Fuentes de Datos</TreeLabel>
            </TreeRow>
            <TreeRow $indent={19}>
              <TwistPlus />
              <Dots $w={6} />
              <TreeIcon $w={13} $gap={6}><DbIcon /></TreeIcon>
              <TreeLabel>directOracle [Oracle]</TreeLabel>
            </TreeRow>
            <TreeRow>
              <Dots $w={13} style={{ marginLeft: 4 }} />
              <TreeIcon $w={15} $gap={6}><BizIcon /></TreeIcon>
              <TreeLabel>Objetos de Negocios</TreeLabel>
            </TreeRow>
            <TreeRow>
              <TwistPlus />
              <Dots $w={4} />
              <TreeIcon $w={15} $gap={6}><TagBox t="VAR" /></TreeIcon>
              <TreeLabel>Variables</TreeLabel>
            </TreeRow>
            <TreeRow>
              <TwistPlus />
              <Dots $w={4} />
              <TreeIcon $w={15} $gap={6}><TagBox t="Σ#" c={G} /></TreeIcon>
              <TreeLabel>Variable del Sistema</TreeLabel>
            </TreeRow>
            <TreeRow>
              <TwistPlus />
              <Dots $w={4} />
              <TreeIcon $w={15} $gap={6}><FxMark>fx</FxMark></TreeIcon>
              <TreeLabel>Funciones</TreeLabel>
            </TreeRow>
          </Tree>
          <Checks>
            <CheckRow><Box><TickIcon /></Box>Crear Campo con Doble-Clic</CheckRow>
            <CheckRow><Box><TickIcon /></Box>Crear Etiqueta</CheckRow>
            <CheckRow><Box />Usar Alias</CheckRow>
          </Checks>
          <BottomTabs>
            <BottomTab $w={68} $pad={7}><PropIcon />Propi...</BottomTab>
            <BottomTab $w={66} $on $pad={5}><DictIcon />Dicci...</BottomTab>
            <BottomTab $w={60} $pad={5}><TreeTabIcon />Árbol ...</BottomTab>
          </BottomTabs>
        </Panel>
      </Work>
    </Root>
  );
}
